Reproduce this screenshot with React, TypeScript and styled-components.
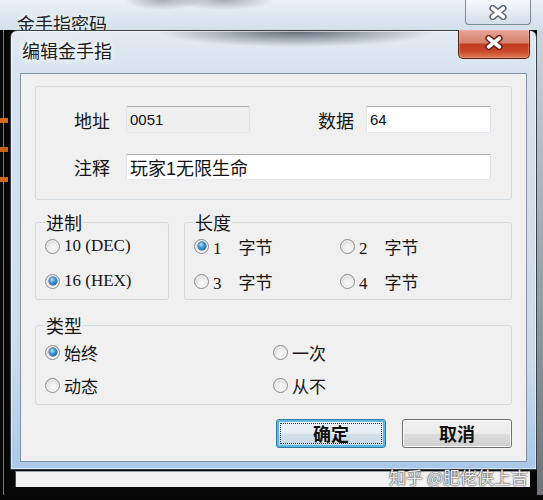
import styled, { createGlobalStyle } from "styled-components";

const GlobalStyle = createGlobalStyle`
  html, body {
    margin: 0;
    padding: 0;
    background: #050505;
  }
  body {
    font-family: "Noto Sans CJK SC", "Liberation Sans", sans-serif;
  }
`;

const cjk = `"Noto Sans CJK SC", "Liberation Sans", sans-serif`;

const Desktop = styled.div`
  position: relative;
  width: 543px;
  height: 500px;
  overflow: hidden;
  background: #050505;
`;

const OuterWindow = styled.div`
  margin-left: -4px;
  width: 547px;
  height: 495px;
  display: flex;
  flex-direction: column;
  border-radius: 0 0 4px 4px;
  background: #2b2e32;
`;

const OuterTitleBar = styled.div`
  height: 30px;
  flex: none;
  display: flex;
  justify-content: space-between;
  align-items: flex-start;
  padding: 0 12px 0 21px;
  background:
    radial-gradient(ellipse 40px 10px at 167px 0px, rgba(80, 90, 100, 0.45), transparent),
    radial-gradient(ellipse 50px 10px at 228px 0px, rgba(80, 90, 100, 0.45), transparent),
    linear-gradient(to bottom, #eaf1f7, #d3dfea);
`;

const OuterTitle = styled.span`
  margin-top: 13px;
  font-family: ${cjk};
  font-size: 18px;
  line-height: 20px;
  color: #222;
  text-shadow: 0 0 6px #fff;
`;

const OuterClose = styled.div`
  width: 66px;
  height: 25px;
  display: flex;
  align-items: center;
  justify-content: center;
  box-sizing: border-box;
  border: 1px solid #7d8996;
  border-top: none;
  border-radius: 0 0 4px 4px;
  background: linear-gradient(to bottom, rgba(255, 255, 255, 0.55), rgba(205, 218, 232, 0.5));
`;

const OuterBody = styled.div`
  flex: 1;
  display: flex;
  flex-direction: column;
  justify-content: flex-end;
  padding: 0 13px 8px 19px;
  background:
    linear-gradient(#d4691d, #d4691d) 0 88px / 12px 5px no-repeat,
    linear-gradient(#c9601a, #c9601a) 0 117px / 12px 5px no-repeat,
    linear-gradient(#d4691d, #d4691d) 0 147px / 12px 5px no-repeat,
    linear-gradient(#7a7a7a, #7a7a7a) 7px 0 / 1px 100% no-repeat,
    linear-gradient(to bottom, #cdd4db, #6c7379) right top / 6px 100% no-repeat,
    #070707;
`;

const StatusStrip = styled.div`
  height: 15px;
  background: #f2f2f2;
  border-top: 1px solid #9aa3ab;
  border-left: 1px solid #4a4a4a;
`;

const Dialog = styled.div`
  position: absolute;
  left: 10px;
  top: 30px;
  width: 527px;
  height: 440px;
  box-sizing: border-box;
  display: flex;
  flex-direction: column;
  border: 1px solid #37414c;
  border-radius: 7px 7px 0 0;
  box-shadow: inset 0 0 0 1px rgba(255, 255, 255, 0.55);
  background:
    radial-gradient(ellipse 140px 16px at 285px 0px, rgba(40, 50, 60, 0.7), transparent),
    linear-gradient(to bottom, #e3ebf3 0, #d8e3ee 42px, #cddbe9 75%, #a9c8e9 100%);
`;

const TitleBar = styled.div`
  height: 42px;
  flex: none;
  display: flex;
  justify-content: space-between;
  align-items: flex-start;
  padding: 0 6px 0 11px;
`;

const DialogTitle = styled.span`
  margin-top: 9px;
  font-family: ${cjk};
  font-size: 18px;
  line-height: 20px;
  color: #1c1c1c;
  text-shadow: 0 0 6px #fff, 0 0 10px #fff;
`;

const RedClose = styled.div`
  margin-top: -1px;
  width: 72px;
  height: 29px;
  box-sizing: border-box;
  display: flex;
  align-items: center;
  justify-content: center;
  padding-bottom: 3px;
  border: 1px solid #5a1f14;
  border-top: none;
  border-radius: 0 0 5px 5px;
  box-shadow: inset 0 0 0 1px rgba(255, 200, 180, 0.35);
  background: linear-gradient(
    to bottom,
    #e6a394 0%,
    #d6826f 45%,
    #c33b1f 52%,
    #c8462a 75%,
    #de7a55 100%
  );
`;

const Client = styled.div`
  margin: 0 9px;
  height: 389px;
  flex: none;
  box-sizing: border-box;
  display: flex;
  flex-direction: column;
  border: 1px solid #8193a5;
  background: #f0f0f0;
  padding: 12px 14px 13px;
`;

const TopGroup = styled.div`
  height: 114px;
  box-sizing: border-box;
  display: grid;
  grid-template-columns: 52px 124px 1fr 48px 125px;
  grid-template-rows: 27px 26px;
  row-gap: 21px;
  align-items: center;
  padding: 19px 20px 19px 38px;
  border: 1px solid #d3dbe1;
  border-radius: 3px;
`;

const FieldLabel = styled.span`
  font-family: ${cjk};
  font-size: 18px;
  line-height: 20px;
  color: #151515;
`;

const TextBox = styled.input<{ $size: number; $wide?: boolean; $disabled?: boolean }>`
  width: 100%;
  height: 100%;
  box-sizing: border-box;
  margin: 0;
  padding: 0 3px;
  grid-column: ${({ $wide }) => ($wide ? "2 / 6" : "auto")};
  border: 1px solid;
  border-color: #abadb3 #dbdfe6 #e3e9ef #e2e3ea;
  border-radius: 2px;
  background: ${({ $disabled }) => ($disabled ? "#efefef" : "#ffffff")};
  font-family: "Liberation Sans", "Noto Sans CJK SC", sans-serif;
  font-size: ${({ $size }) => $size}px;
  color: #111;
  outline: none;
`;

const OptionsRow = styled.div`
  display: grid;
  grid-template-columns: 134px 1fr;
  column-gap: 15px;
  margin-top: 13px;
`;

const GroupSet = styled.fieldset<{ $cols: string; $rowGap: number; $top: number; $bottom: number }>`
  margin: 0;
  min-width: 0;
  display: grid;
  grid-template-columns: ${({ $cols }) => $cols};
  row-gap: ${({ $rowGap }) => $rowGap}px;
  align-content: start;
  padding: ${({ $top }) => $top}px 10px ${({ $bottom }) => $bottom}px 9px;
  border: 1px solid #d3dbe1;
  border-radius: 3px;
`;

const TypeSet = styled(GroupSet)`
  margin-top: 16px;
`;

const GroupTitle = styled.legend`
  padding: 0 1px;
  font-family: ${cjk};
  font-size: 18px;
  line-height: 18px;
  color: #151515;
`;

const RadioOption = styled.label`
  display: flex;
  align-items: center;
  gap: 4px;
  height: 20px;
  font-family: "Liberation Serif", "Noto Sans CJK SC", serif;
  font-size: 17px;
  color: #151515;
  white-space: nowrap;
`;

const RadioDot = styled.span<{ $checked?: boolean }>`
  position: relative;
  flex: none;
  width: 15px;
  height: 15px;
  box-sizing: border-box;
  border-radius: 50%;
  border: 1px solid #8a8a8a;
  background: radial-gradient(circle at 55% 60%, #fbfbfb 0, #ededed 40%, #c4c4c4 100%);
  box-shadow: inset 0 0 0 1px rgba(255, 255, 255, 0.7);

  &::after {
    content: "";
    display: ${({ $checked }) => ($checked ? "block" : "none")};
    position: absolute;
    left: 2.5px;
    top: 2.5px;
    width: 8px;
    height: 8px;
    border-radius: 50%;
    background: radial-gradient(circle at 40% 35%, #b5e6ff 0, #3a9ad8 40%, #0e4f86 100%);
    box-shadow: 0 0 0 0.5px #0b3d66;
  }
`;

const ButtonRow = styled.div`
  display: flex;
  justify-content: flex-end;
  gap: 16px;
  margin-top: 14px;
`;

const DialogButton = styled.button<{ $default?: boolean }>`
  position: relative;
  width: 110px;
  height: 29px;
  margin: 0;
  padding: 0 0 2px;
  border-radius: 3px;
  font-family: ${cjk};
  font-size: 18px;
  font-weight: 700;
  color: #111;
  border: 1px solid ${({ $default }) => ($default ? "#2f78a8" : "#707070")};
  box-shadow: ${({ $default }) =>
    $default ? "inset 0 0 0 2px #5cb8e0" : "inset 0 0 0 1px #fbfbfb"};
  background: ${({ $default }) =>
    $default
      ? "linear-gradient(to bottom, #eef4f8 0%, #e4edf3 50%, #d4e1ea 51%, #c9d9e4 100%)"
      : "linear-gradient(to bottom, #f2f2f2 0%, #ebebeb 50%, #dddddd 51%, #cfcfcf 100%)"};

  &::after {
    content: "";
    display: ${({ $default }) => ($default ? "block" : "none")};
    position: absolute;
    inset: 3px;
    border: 1px dotted #2a3a44;
    border-radius: 1px;
  }
`;

const Watermark = styled.span`
  position: absolute;
  right: 15px;
  top: 467px;
  font-family: ${cjk};
  font-size: 17px;
  line-height: 20px;
  color: rgba(255, 255, 255, 0.92);
  text-shadow: 0 0 2px rgba(40, 40, 40, 0.9), 0 0 1px #333;
`;

const CloseGlyph = ({ width, height, edge }: { width: number; height: number; edge: string }) => (
  <svg width={width} height={height} viewBox="0 0 20 14">
    <path d="M5 3 L15 11 M15 3 L5 11" stroke={edge} strokeWidth={6.2} strokeLinecap="round" fill="none" />
    <path d="M5 3 L15 11 M15 3 L5 11" stroke="#ffffff" strokeWidth={3.4} strokeLinecap="round" fill="none" />
  </svg>
);

const Radio = ({ checked, children }: { checked?: boolean; children: string }) => (
  <RadioOption>
    <RadioDot $checked={checked} />
    {children}
  </RadioOption>
);

export default function App() {
  return (
    <>
      <GlobalStyle />
      <Desktop>
        <OuterWindow>
          <OuterTitleBar>
            <OuterTitle>金手指密码</OuterTitle>
            <OuterClose>
              <CloseGlyph width={22} height={15} edge="#5b6672" />
            </OuterClose>
          </OuterTitleBar>
          <OuterBody>
            <StatusStrip />
          </OuterBody>
        </OuterWindow>

        <Dialog>
          <TitleBar>
            <DialogTitle>编辑金手指</DialogTitle>
            <RedClose>
              <CloseGlyph width={22} height={15} edge="#6a2014" />
            </RedClose>
          </TitleBar>

          <Client>
            <TopGroup>
              <FieldLabel>地址</FieldLabel>
              <TextBox $size={15} $disabled readOnly value="0051" />
              <span />
              <FieldLabel>数据</FieldLabel>
              <TextBox $size={15} readOnly value="64" />
              <FieldLabel>注释</FieldLabel>
              <TextBox $size={18} $wide readOnly value="玩家1无限生命" />
            </TopGroup>

            <OptionsRow>
              <GroupSet $cols="1fr" $rowGap={15} $top={5} $bottom={8}>
                <GroupTitle>进制</GroupTitle>
                <Radio>10 (DEC)</Radio>
                <Radio checked>16 (HEX)</Radio>
              </GroupSet>
              <GroupSet $cols="146px 1fr" $rowGap={15} $top={5} $bottom={8}>
                <GroupTitle>长度</GroupTitle>
                <Radio checked>{"1\u2003字节"}</Radio>
                <Radio>{"2\u2003字节"}</Radio>
                <Radio>{"3\u2003字节"}</Radio>
                <Radio>{"4\u2003字节"}</Radio>
              </GroupSet>
            </OptionsRow>

            <TypeSet $cols="228px 1fr" $rowGap={13} $top={8} $bottom={9}>
              <GroupTitle>类型</GroupTitle>
              <Radio checked>始终</Radio>
              <Radio>一次</Radio>
              <Radio>动态</Radio>
              <Radio>从不</Radio>
            </TypeSet>

            <ButtonRow>
              <DialogButton $default>确定</DialogButton>
              <DialogButton>取消</DialogButton>
            </ButtonRow>
          </Client>
        </Dialog>

        <Watermark>知乎 @肥佬侠上吉</Watermark>
      </Desktop>
    </>
  );
}
